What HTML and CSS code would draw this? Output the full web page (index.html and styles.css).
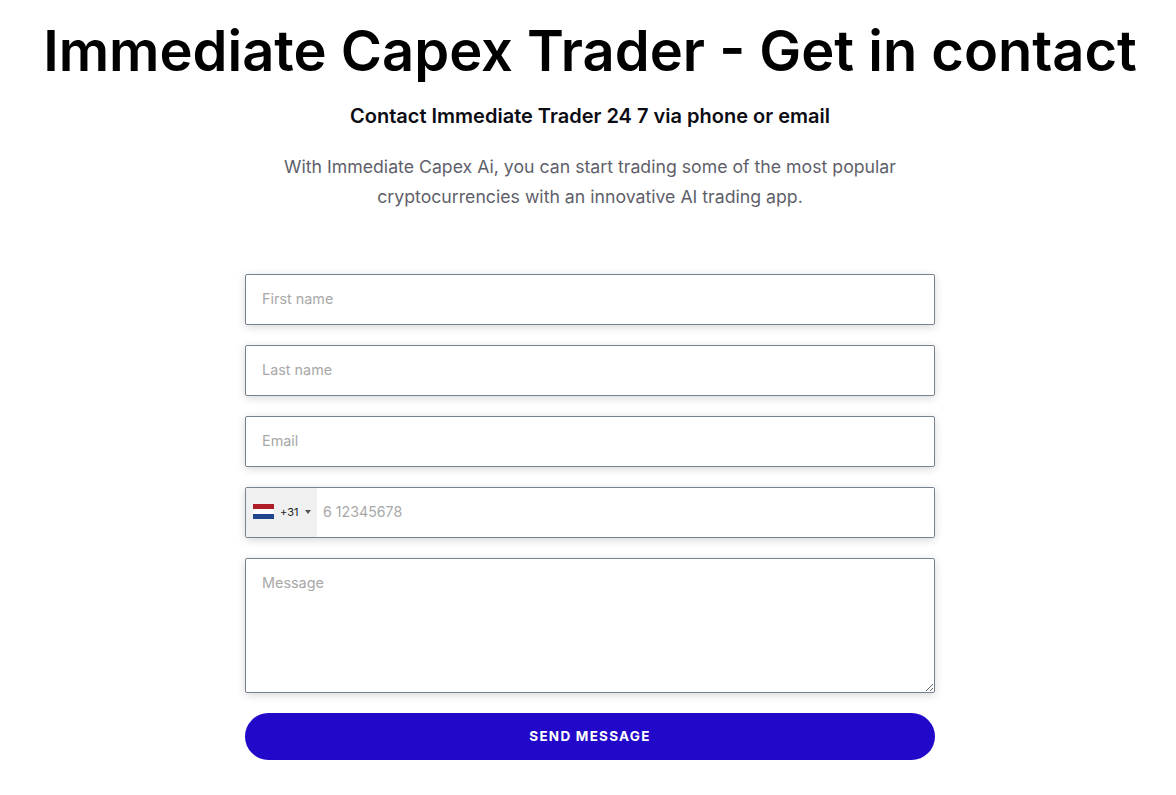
FILE: index.html
```html
<!DOCTYPE html>
<html lang="en">
<head>
    <meta charset="UTF-8">
    <title>Immediate Capex Trader</title>
    <link rel="stylesheet" href="styles.css">
</head>
<body>
    <h1>Immediate Capex Trader - Get in contact</h1>
    <h2 class="sub-title">Contact Immediate Trader 24 7 via phone or email</h2>
    <p class="intro">With Immediate Capex Ai, you can start trading some of the most popular cryptocurrencies with an innovative AI trading app.</p>

    <form class="contact-form">
        <input type="text" class="field" placeholder="First name">
        <input type="text" class="field" placeholder="Last name">
        <input type="text" class="field" placeholder="Email">

        <div class="phone-field">
            <div class="country-select">
                <svg class="flag" width="21" height="15" viewBox="0 0 21 15">
                    <rect width="21" height="15" fill="#fff"/>
                    <rect width="21" height="5" fill="#ae1c28"/>
                    <rect y="10" width="21" height="5" fill="#21468b"/>
                </svg>
                <span class="dial-code">+31</span>
                <span class="arrow"></span>
            </div>
            <input type="text" class="phone-input" placeholder="6 12345678">
        </div>

        <textarea class="field message" placeholder="Message"></textarea>
        <button type="button" class="send-button">SEND MESSAGE</button>
    </form>
</body>
</html>
```

FILE: styles.css
```css
body {
    margin: 0;
    padding-left: 4px;
    font-family: "Inter", sans-serif;
    background-color: #fff;
    display: flex;
    flex-direction: column;
    align-items: center;
}

h1 {
    font-size: 56px;
    line-height: 62px;
    font-weight: 600;
    color: #000;
    margin: 20px 0 0;
    text-align: center;
    white-space: nowrap;
}

.sub-title {
    font-size: 20px;
    line-height: 28px;
    font-weight: 600;
    color: #0c0c14;
    margin: 20px 0 0;
    text-align: center;
}

.intro {
    width: 660px;
    font-size: 17.7px;
    line-height: 30px;
    color: #5f5f6b;
    margin: 22px 0 0;
    text-align: center;
}

.contact-form {
    width: 690px;
    margin-top: 62px;
    display: flex;
    flex-direction: column;
    gap: 20px;
}

.field,
.phone-field {
    box-sizing: border-box;
    width: 100%;
    height: 51px;
    border: 1px solid #77828f;
    border-radius: 2px;
    background-color: #fff;
    box-shadow: 0 2px 8px 0 rgba(0, 0, 0, 0.16);
}

.field {
    padding: 0 16px 2px;
    font-family: "Inter", sans-serif;
    font-size: 14.4px;
    color: #333;
}

.field::placeholder,
.phone-input::placeholder {
    color: #a8a8a8;
    opacity: 1;
}

.phone-field {
    display: flex;
    overflow: hidden;
}

.country-select {
    width: 71px;
    display: flex;
    align-items: center;
    background-color: #f0f0f0;
    padding: 0 0 2px 7px;
    box-sizing: border-box;
}

.flag {
    display: block;
}

.dial-code {
    font-size: 11px;
    color: #222;
    margin-left: 6px;
}

.arrow {
    width: 0;
    height: 0;
    margin-left: 7px;
    border-left: 3px solid transparent;
    border-right: 3px solid transparent;
    border-top: 4px solid #555;
}

.phone-input {
    flex: 1;
    border: none;
    outline: none;
    padding: 0 6px 2px;
    font-family: "Inter", sans-serif;
    font-size: 14.2px;
}

.message {
    height: 135px;
    padding-top: 15px;
    display: block;
}

.send-button {
    height: 47px;
    border: none;
    border-radius: 24px;
    padding-bottom: 3px;
    background-color: #2209c9;
    color: #fff;
    font-family: "Inter", sans-serif;
    font-size: 13.5px;
    font-weight: 700;
    letter-spacing: 1.25px;
    cursor: pointer;
}
```
